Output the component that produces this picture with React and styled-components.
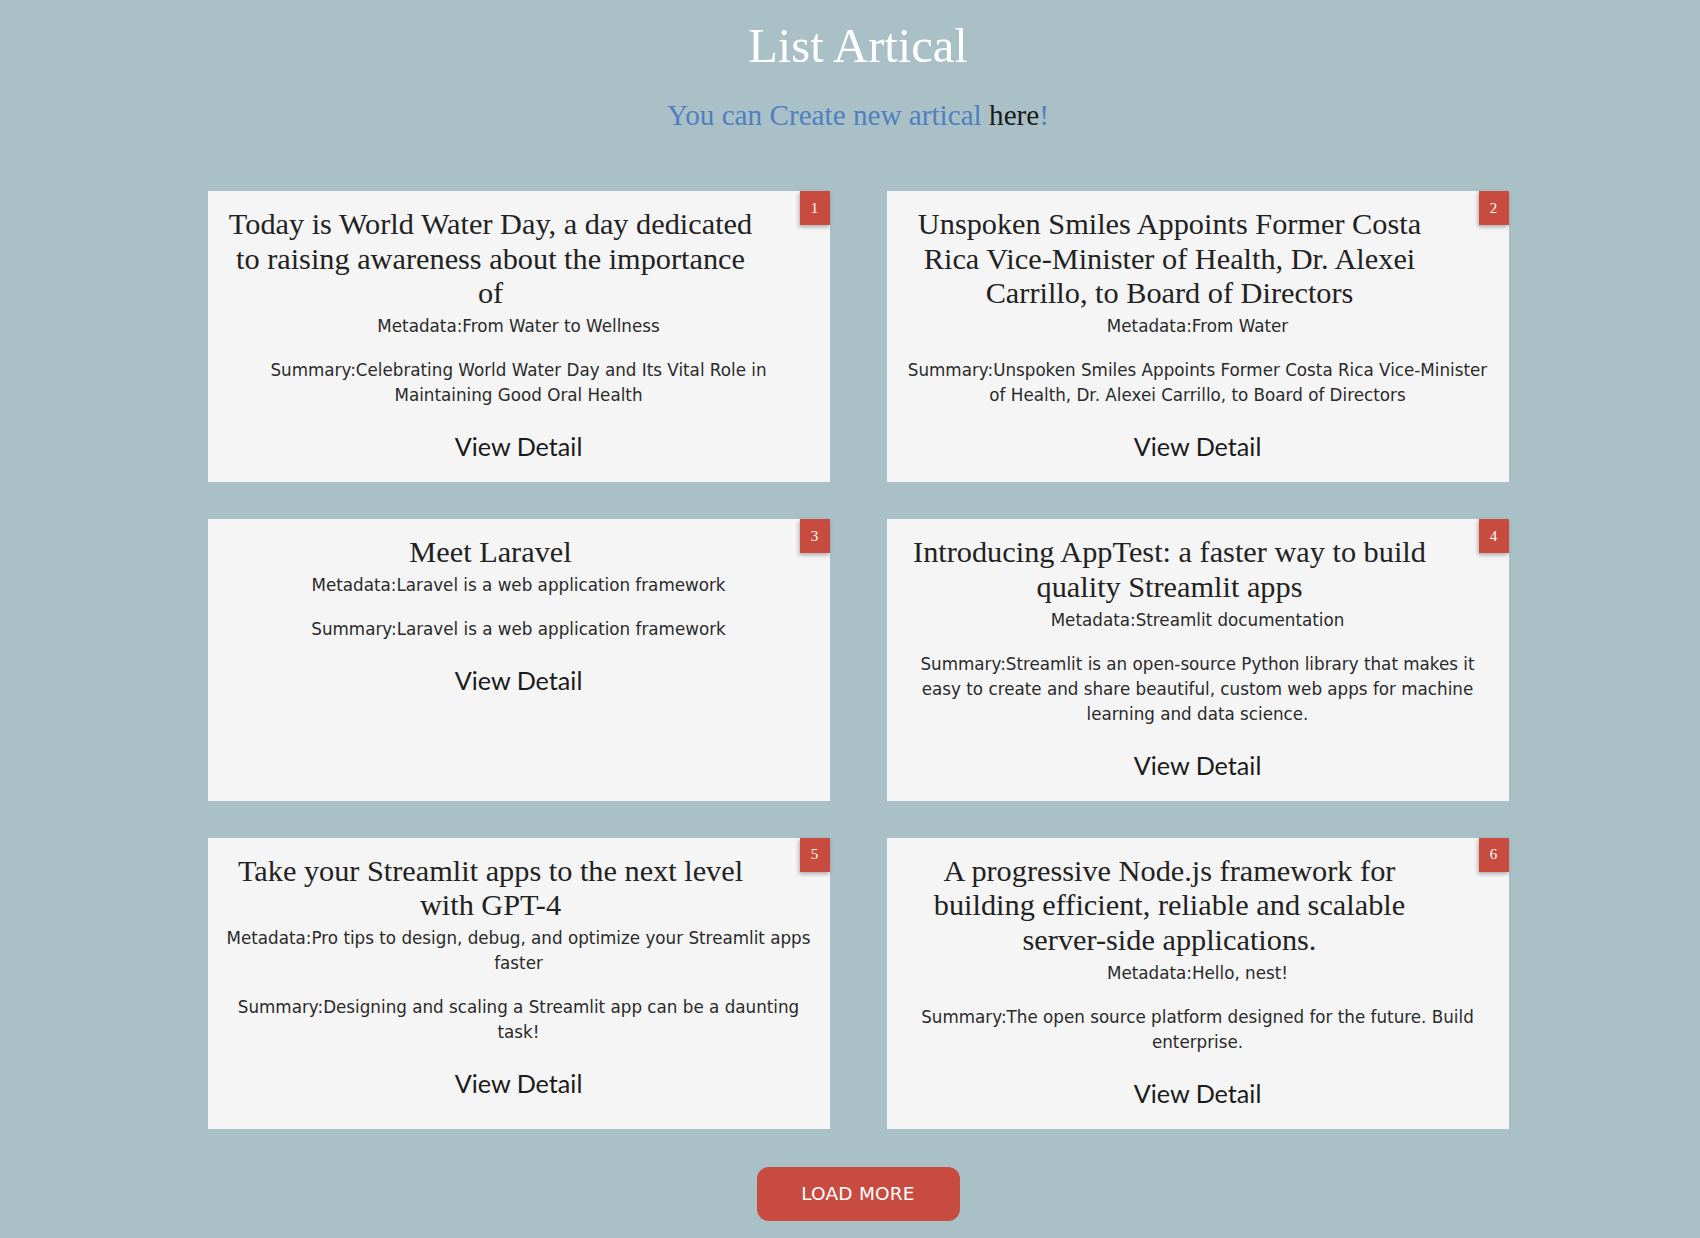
import React from 'react';
import styled, { createGlobalStyle } from 'styled-components';

const GlobalStyle = createGlobalStyle`
  html, body {
    margin: 0;
    padding: 0;
    background: #a9c0c7;
    overflow: hidden;
  }
`;

const Page = styled.div`
  min-height: 100vh;
  padding: 0 0 18px 16px;
  box-sizing: border-box;
  display: flex;
  flex-direction: column;
  align-items: center;
  font-family: 'Liberation Serif', serif;
`;

const Heading = styled.h1`
  margin: 18px 0 0;
  font-size: 48.5px;
  font-weight: 400;
  line-height: 55px;
  color: #ffffff;
`;

const Intro = styled.p`
  margin: 26px 0 0;
  font-size: 29.2px;
  line-height: 32px;
  color: #4f7fbf;
`;

const HereLink = styled.a`
  color: #1b1b1b;
  text-decoration: none;
`;

const Grid = styled.div`
  width: 1301px;
  margin-top: 60px;
  display: grid;
  grid-template-columns: 1fr 1fr;
  column-gap: 57px;
  row-gap: 37px;
`;

const Card = styled.article`
  position: relative;
  background: #f5f5f5;
  padding: 16px 16px 18px;
  text-align: center;
  color: #222;
`;

const Badge = styled.span`
  position: absolute;
  top: 0;
  right: 0;
  width: 30px;
  height: 34px;
  display: flex;
  align-items: center;
  justify-content: center;
  background: #c84b3f;
  color: #fff;
  font-family: 'Liberation Serif', serif;
  font-size: 15px;
  box-shadow: -1px 2px 4px rgba(0, 0, 0, 0.3);
`;

const Title = styled.h2`
  margin: 0 57px 0 1px;
  font-family: 'Liberation Serif', serif;
  font-size: 30.3px;
  font-weight: 400;
  line-height: 34.7px;
  color: #222;
`;

const Info = styled.p`
  margin: ${({ $gap }) => $gap}px 0 0;
  font-family: 'DejaVu Sans', Verdana, sans-serif;
  font-size: 16.75px;
  line-height: 25px;
  color: #2a2a2a;
`;

const DetailLink = styled.a`
  display: block;
  margin-top: 20px;
  font-family: Lato, 'Open Sans', sans-serif;
  font-size: 25.2px;
  line-height: 36px;
  color: #1b1b1b;
  text-decoration: none;
`;

const LoadMore = styled.button`
  margin-top: 38px;
  width: 203px;
  height: 54px;
  border: none;
  border-radius: 12px;
  background: #c84b3f;
  color: #fff;
  font-family: 'DejaVu Sans', Verdana, sans-serif;
  font-size: 18.5px;
  letter-spacing: 0.2px;
  cursor: pointer;
`;

const articles = [
  {
    id: 1,
    title: 'Today is World Water Day, a day dedicated to raising awareness about the importance of',
    metadata: 'From Water to Wellness',
    summary: 'Celebrating World Water Day and Its Vital Role in Maintaining Good Oral Health',
  },
  {
    id: 2,
    title: 'Unspoken Smiles Appoints Former Costa Rica Vice-Minister of Health, Dr. Alexei Carrillo, to Board of Directors',
    metadata: 'From Water',
    summary: 'Unspoken Smiles Appoints Former Costa Rica Vice-Minister of Health, Dr. Alexei Carrillo, to Board of Directors',
  },
  {
    id: 3,
    title: 'Meet Laravel',
    metadata: 'Laravel is a web application framework',
    summary: 'Laravel is a web application framework',
  },
  {
    id: 4,
    title: 'Introducing AppTest: a faster way to build quality Streamlit apps',
    metadata: 'Streamlit documentation',
    summary: 'Streamlit is an open-source Python library that makes it easy to create and share beautiful, custom web apps for machine learning and data science.',
  },
  {
    id: 5,
    title: 'Take your Streamlit apps to the next level with GPT-4',
    metadata: 'Pro tips to design, debug, and optimize your Streamlit apps faster',
    summary: 'Designing and scaling a Streamlit app can be a daunting task!',
  },
  {
    id: 6,
    title: 'A progressive Node.js framework for building efficient, reliable and scalable server-side applications.',
    metadata: 'Hello, nest!',
    summary: 'The open source platform designed for the future. Build enterprise.',
  },
];

const ArticleCard = ({ article }) => (
  <Card>
    <Badge>{article.id}</Badge>
    <Title>{article.title}</Title>
    <Info $gap={3}>Metadata:{article.metadata}</Info>
    <Info $gap={19}>Summary:{article.summary}</Info>
    <DetailLink href="#">View Detail</DetailLink>
  </Card>
);

const App = () => (
  <>
    <GlobalStyle />
    <Page>
      <Heading>List Artical</Heading>
      <Intro>
        You can Create new artical <HereLink href="#">here</HereLink>!
      </Intro>
      <Grid>
        {articles.map((a) => (
          <ArticleCard key={a.id} article={a} />
        ))}
      </Grid>
      <LoadMore>LOAD MORE</LoadMore>
    </Page>
  </>
);

export default App;
